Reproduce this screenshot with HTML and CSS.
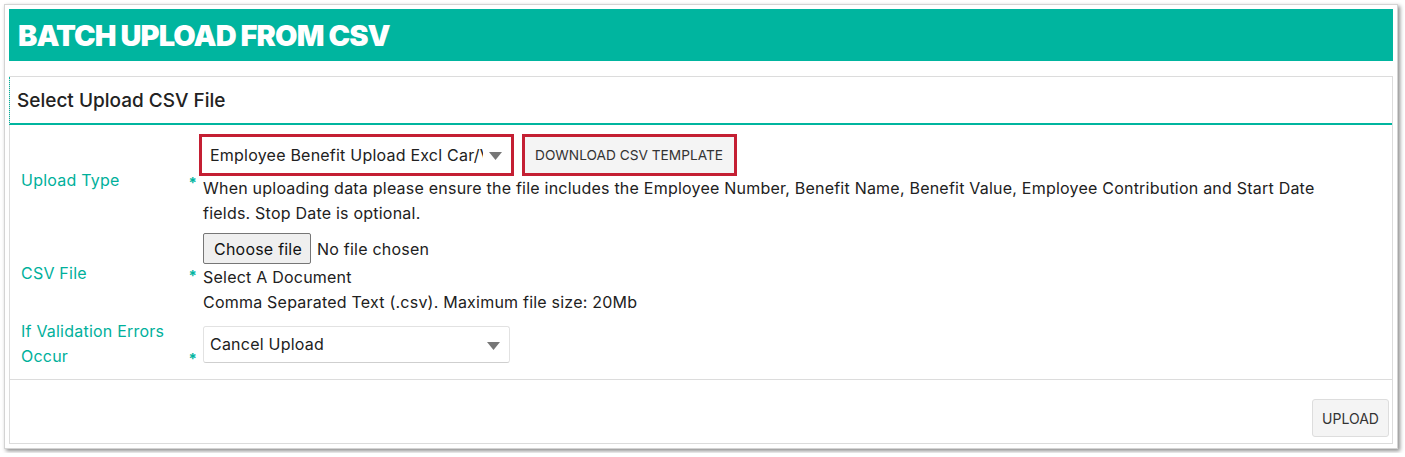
FILE: index.html
```html
<!DOCTYPE html>
<html lang="en">
<head>
<meta charset="utf-8">
<title>Batch Upload From CSV</title>
<link rel="stylesheet" href="styles.css">
</head>
<body>
<div class="card">
  <div class="page-header"><h1>BATCH UPLOAD FROM CSV</h1></div>
  <div class="panel">
    <div class="panel-heading">Select Upload CSV File</div>
    <div class="panel-body">
      <div class="form-row row-type">
        <div class="label-cell"><span class="label-text">Upload Type</span><span class="req">*</span></div>
        <div class="field-cell">
          <div class="controls">
            <div class="hl">
              <div class="select-wrap">
                <select class="select"><option>Employee Benefit Upload Excl Car/Van</option></select>
                <svg class="caret" width="13" height="8" viewBox="0 0 13 8"><path d="M0 0H13L6.5 8Z" fill="#777"/></svg>
              </div>
            </div>
            <div class="hl"><button class="btn-template" type="button">DOWNLOAD CSV TEMPLATE</button></div>
          </div>
          <p class="help">When uploading data please ensure the file includes the Employee Number, Benefit Name, Benefit Value, Employee Contribution and Start Date fields. Stop Date is optional.</p>
        </div>
      </div>
      <div class="form-row row-file">
        <div class="label-cell"><span class="label-text">CSV File</span><span class="req">*</span></div>
        <div class="field-cell">
          <div class="file-line"><button class="btn-file" type="button">Choose file</button><span class="file-name">No file chosen</span></div>
          <p class="help">Select A Document</p>
          <p class="help">Comma Separated Text (.csv). Maximum file size: 20Mb</p>
        </div>
      </div>
      <div class="form-row row-errors">
        <div class="label-cell"><span class="label-text">If Validation Errors Occur</span><span class="req">*</span></div>
        <div class="field-cell">
          <div class="select-wrap plain">
            <select class="select"><option>Cancel Upload</option></select>
            <svg class="caret" width="13" height="8" viewBox="0 0 13 8"><path d="M0 0H13L6.5 8Z" fill="#777"/></svg>
          </div>
        </div>
      </div>
    </div>
    <div class="panel-footer"><button class="btn-upload" type="button">UPLOAD</button></div>
  </div>
</div>
</body>
</html>
```
FILE: styles.css
```css
* { box-sizing: border-box; }
html, body { margin: 0; padding: 0; background: #fff; }
body {
  font-family: Inter, "Noto Sans", sans-serif;
  font-size: 16px;
  letter-spacing: 0.22px;
  color: #212121;
  padding: 4px;
}
.card {
  width: 1394px;
  border: 1px solid #d4d4d4;
  padding: 4px;
  background: #fff;
  box-shadow: 2px 2px 4px rgba(0,0,0,0.45);
}
.page-header {
  height: 52px;
  background: #00b59f;
  padding-left: 9px;
  display: flex;
  align-items: center;
}
.page-header h1 {
  margin: 0;
  color: #fff;
  font-size: 29px;
  font-weight: 900;
  letter-spacing: -0.9px;
  line-height: 1;
}
.panel {
  margin-top: 15px;
  border: 1px solid #dcdcdc;
}
.panel-heading {
  height: 48px;
  border-bottom: 2px solid #00b59f;
  border-left: 1px dotted #00b59f;
  margin-left: -1px;
  padding-left: 7px;
  display: flex;
  align-items: center;
  font-size: 19px;
  font-weight: 500;
  letter-spacing: 0;
  color: #222;
}
.panel-body {
  padding: 9px 11px 10px 11px;
  border-bottom: 1px solid #dcdcdc;
}
.form-row {
  display: grid;
  grid-template-columns: 182px 1fr;
  align-items: center;
}
.field-cell { padding-right: 40px; }
.row-file { margin-top: 6px; }
.row-errors { margin-top: 4px; }
.label-cell {
  display: flex;
  align-items: flex-end;
  justify-content: space-between;
  line-height: 25px;
  color: #00b09b;
  padding-right: 6px;
}
.label-text { max-width: 160px; }
.req {
  font-size: 15px;
  font-weight: 700;
  color: #00b59f;
  line-height: 25px;
  margin-bottom: -2px;
}
.controls { display: flex; gap: 8px; margin-left: -4px; }
.hl { border: 3px solid #c41f33; display: flex; }
.select-wrap { position: relative; width: 309px; height: 36px; }
.select-wrap.plain {
  width: 307px;
  height: 37px;
  border: 1px solid #e2e2e2;
  border-bottom-color: #cfcfcf;
  border-radius: 3px;
}
.select {
  appearance: none;
  -webkit-appearance: none;
  width: 100%;
  height: 100%;
  border: 0;
  background: #fff;
  font-family: inherit;
  font-size: 16px;
  letter-spacing: inherit;
  color: #212121;
  padding: 0 28px 0 8px;
  margin: 0;
  outline: none;
}
.plain .select { padding-left: 6px; border-radius: 3px; }
.caret { position: absolute; right: 9px; top: 15px; pointer-events: none; }
.btn-template {
  height: 36px;
  width: 209px;
  border: 0;
  background: #f4f4f4;
  font-family: inherit;
  font-size: 13.7px;
  color: #333;
  padding: 0 0 0 10px;
  text-align: left;
}
.help { margin: 0; line-height: 25px; }
.file-line { height: 33px; display: flex; align-items: center; gap: 6px; }
.btn-file {
  height: 31px;
  width: 108px;
  background: #efefef;
  border: 1px solid #767676;
  border-radius: 2px;
  font-family: inherit;
  font-size: 16px;
  letter-spacing: inherit;
  color: #111;
  padding: 0 0 0 2px;
}
.panel-footer {
  height: 63px;
  display: flex;
  justify-content: flex-end;
  align-items: flex-end;
  padding: 0 3px 6px 0;
}
.btn-upload {
  width: 77px;
  height: 38px;
  background: #f4f4f4;
  border: 1px solid #dddddd;
  border-radius: 3px;
  font-family: inherit;
  font-size: 14px;
  color: #333;
  padding: 0;
}
```
